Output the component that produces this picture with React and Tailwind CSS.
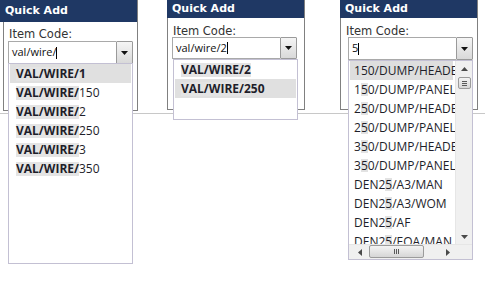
import React from 'react';

const ROWS_WIRE = ['1', '150', '2', '250', '3', '350'];

const ROWS_FIVE = [
  ['1', '5', '0/DUMP/HEADER'],
  ['1', '5', '0/DUMP/PANELS'],
  ['2', '5', '0/DUMP/HEADER'],
  ['2', '5', '0/DUMP/PANELS'],
  ['3', '5', '0/DUMP/HEADER'],
  ['3', '5', '0/DUMP/PANELS'],
  ['DEN2', '5', '/A3/MAN'],
  ['DEN2', '5', '/A3/WOM'],
  ['DEN2', '5', '/AF'],
  ['DEN2', '5', '/EOA/MAN'],
];

function Arrow({ dir }) {
  const d = {
    down: 'M0 0h7L3.5 4z',
    up: 'M0 4h7L3.5 0z',
    left: 'M4 0v7L0 3.5z',
    right: 'M0 0v7L4 3.5z',
  }[dir];
  const size = dir === 'left' || dir === 'right' ? [4, 7] : [7, 4];
  return (
    <svg width={size[0]} height={size[1]} viewBox={`0 0 ${size[0]} ${size[1]}`}>
      <path d={d} fill={dir === 'down' ? '#4a4a4a' : '#4a4a4a'} />
    </svg>
  );
}

function ComboInput({ value, className }) {
  return (
    <div className={`flex w-[125px] ${className}`}>
      <div className="flex-1 flex items-center pl-[3px] border border-r-0 border-[#a9a9a9] bg-white text-[11px] text-[#111] font-['Open_Sans',sans-serif]">
        <span>{value}</span>
        <span className="inline-block w-px h-[12px] bg-black" />
      </div>
      <div className="w-[17px] flex items-center justify-center border border-[#9a9a9a] rounded-[1px] bg-gradient-to-b from-[#f5f5f5] to-[#d9d9d9]">
        <svg width="7" height="4" viewBox="0 0 7 4">
          <path d="M0 0h7L3.5 4z" fill="#111" />
        </svg>
      </div>
    </div>
  );
}

function Panel({ className, headerClass, bodyClass, inputClass, value, children }) {
  return (
    <div className={`relative w-[138px] shrink-0 ${className}`}>
      <div
        className={`w-[138px] bg-[#1f3864] border-r border-[#7f7f7f] text-white text-[11px] font-bold pl-[5px] flex items-center font-['DejaVu_Sans',sans-serif] ${headerClass}`}
      >
        Quick Add
      </div>
      <div className={`border-x border-b border-[#808080] ${bodyClass}`}>
        <div className="pl-[5px] text-[11.5px] leading-[11px] text-[#333] font-['DejaVu_Sans',sans-serif]">
          Item Code:
        </div>
        <ComboInput value={value} className={inputClass} />
      </div>
      {children}
    </div>
  );
}

function WireRow({ rest, match, selected }) {
  return (
    <div
      className={`mx-[1px] h-[19px] pl-[6px] flex items-center whitespace-nowrap text-[12px] text-[#1e1e2a] ${
        selected ? 'bg-[#e0e0e0] font-bold' : ''
      }`}
    >
      <span className="inline-block leading-[14px] bg-[#e4e4e4] font-bold">{match}</span>
      <span>{rest}</span>
    </div>
  );
}

function VScroll() {
  return (
    <div className="w-[17px] h-full bg-[#f0f0f0] border-l border-[#e6e6e6] flex flex-col items-center">
      <div className="h-[15px] w-full flex items-center justify-center">
        <Arrow dir="up" />
      </div>
      <div className="mt-px w-[13px] h-[12px] rounded-[2px] border border-[#9b9b9b] bg-gradient-to-b from-[#f4f4f4] to-[#d6d6d6] flex flex-col items-center justify-center gap-px">
        <div className="w-[5px] h-px bg-[#5a5a5a]" />
        <div className="w-[5px] h-px bg-[#5a5a5a]" />
        <div className="w-[5px] h-px bg-[#5a5a5a]" />
      </div>
      <div className="flex-1" />
      <div className="h-[15px] w-full flex items-center justify-center">
        <Arrow dir="down" />
      </div>
    </div>
  );
}

function HScroll() {
  return (
    <div className="h-[15px] flex bg-[#f0f0f0] border-t border-[#e6e6e6]">
      <div className="w-[15px] flex items-center justify-center ml-[3px]">
        <Arrow dir="left" />
      </div>
      <div className="ml-[2px] w-[55px] h-[13px] rounded-[2px] border border-[#9b9b9b] bg-gradient-to-b from-[#f4f4f4] to-[#d6d6d6] flex items-center justify-center gap-px">
        <div className="w-px h-[5px] bg-[#5a5a5a]" />
        <div className="w-px h-[5px] bg-[#5a5a5a]" />
        <div className="w-px h-[5px] bg-[#5a5a5a]" />
      </div>
      <div className="flex-1" />
      <div className="w-[15px] flex items-center justify-center">
        <Arrow dir="right" />
      </div>
      <div className="w-[17px] bg-[#f0f0f0]" />
    </div>
  );
}

export default function App() {
  return (
    <div className="w-[500px] h-[284px] bg-white overflow-hidden font-['Open_Sans',sans-serif]">
      <div className="flex items-start">
        {/* panel 1 */}
        <Panel
          headerClass="h-[22px]"
          bodyClass="ml-[3px] w-[135px] h-[89px] pt-[7px]"
          inputClass="ml-[4px] mt-px h-[23px]"
          value="val/wire/"
        >
          <div className="absolute left-[8px] top-[63px] w-[125px] h-[201px] border border-[#c3c0d3] bg-white">
            {ROWS_WIRE.map((r, i) => (
              <WireRow key={r} match="VAL/WIRE/" rest={r} selected={i === 0} />
            ))}
          </div>
        </Panel>

        {/* panel 2 */}
        <Panel
          className="ml-[29px]"
          headerClass="h-[18px]"
          bodyClass="h-[92px] pt-[8px]"
          inputClass="ml-[4px] h-[22px]"
          value="val/wire/2"
        >
          <div className="absolute left-[6px] top-[59px] w-[125px] h-[61px] border border-[#c3c0d3] bg-white">
            <WireRow match="VAL/WIRE/2" rest="" />
            <WireRow match="VAL/WIRE/2" rest="50" selected />
          </div>
        </Panel>

        {/* panel 3 */}
        <Panel
          className="ml-[35px]"
          headerClass="h-[18px]"
          bodyClass="h-[92px] pt-[8px]"
          inputClass="ml-[7px] h-[23px]"
          value="5"
        >
          <div className="absolute left-[8px] top-[60px] w-[125px] h-[200px] border border-[#c3c0d3] bg-white flex flex-col">
            <div className="h-[183px] flex">
              <div className="flex-1 overflow-hidden">
                {ROWS_FIVE.map(([a, m, b], i) => (
                  <div
                    key={i}
                    className={`ml-[1px] mr-[2px] h-[19px] pl-[4px] flex items-center whitespace-nowrap text-[12px] text-[#1e1e2a] ${
                      i === 0 ? 'bg-[#dedede]' : ''
                    }`}
                  >
                    <span>{a}</span>
                    <span className="inline-block leading-[13px] bg-[#e2e2e2]">{m}</span>
                    <span>{b}</span>
                  </div>
                ))}
              </div>
              <VScroll />
            </div>
            <HScroll />
          </div>
        </Panel>
      </div>
      <div className="mt-[2px] w-[485px] h-px bg-[#c8c8c8]" />
    </div>
  );
}
